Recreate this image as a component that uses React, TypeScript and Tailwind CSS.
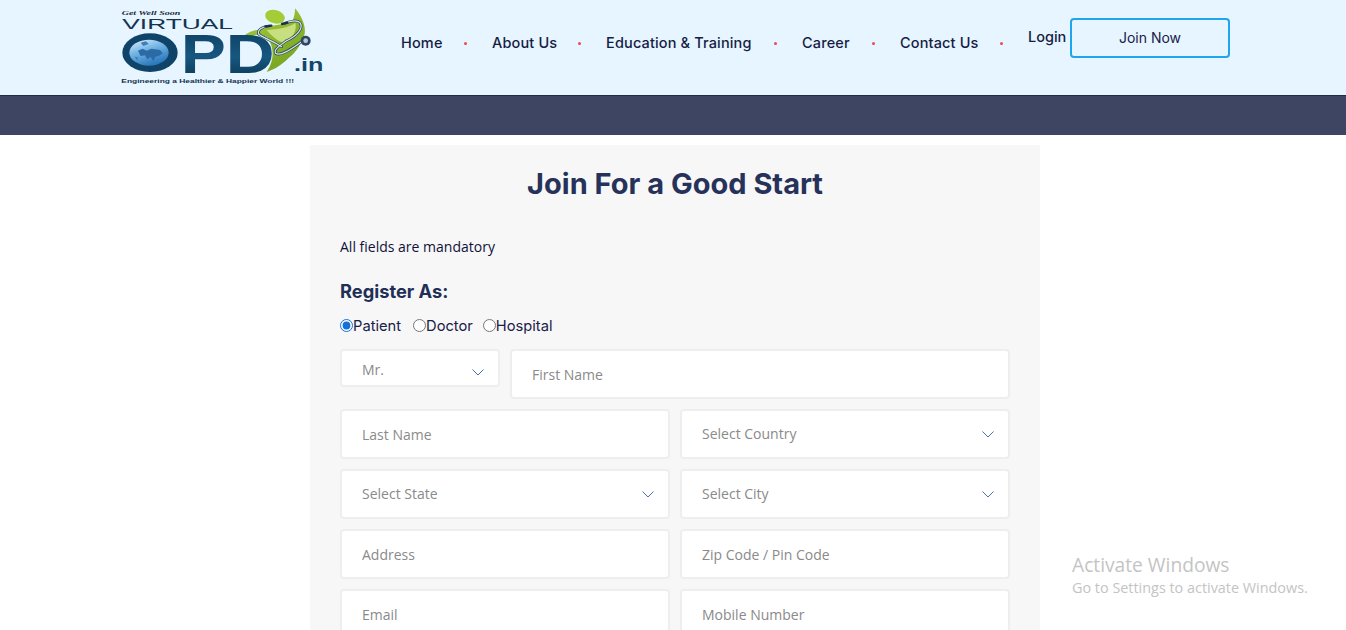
import React from "react";

function Logo() {
  return (
    <svg viewBox="0 0 690 285" className="w-[230px] h-[95px] shrink-0" aria-label="Virtual OPD logo">
      <defs>
        <linearGradient id="opd" x1="0" y1="0" x2="0" y2="1">
          <stop offset="0" stopColor="#0d3b5e" />
          <stop offset="0.55" stopColor="#17577f" />
          <stop offset="0.8" stopColor="#0f4263" />
          <stop offset="1" stopColor="#1d3f5f" />
        </linearGradient>
        <linearGradient id="globe" x1="0" y1="0" x2="0.5" y2="1">
          <stop offset="0" stopColor="#e6f3fb" />
          <stop offset="0.45" stopColor="#79b8e6" />
          <stop offset="1" stopColor="#2b78bd" />
        </linearGradient>
        <linearGradient id="leaf" x1="0" y1="0" x2="0.6" y2="1">
          <stop offset="0" stopColor="#a9cf3c" />
          <stop offset="1" stopColor="#78a423" />
        </linearGradient>
      </defs>
      <text x="35" y="44" fontFamily="Liberation Serif, serif" fontStyle="italic" fontWeight="700" fontSize="21" fill="#1a2a3a" textLength="176" lengthAdjust="spacingAndGlyphs">Get Well Soon</text>
      <text x="37" y="88" fontFamily="Liberation Sans, sans-serif" fontSize="46" fill="#15324e" textLength="332" lengthAdjust="spacingAndGlyphs">VIRTUAL</text>
      <path d="M555 25C585 60 590 95 580 112C570 140 555 160 535 175C515 195 495 208 470 216C488 190 498 150 472 112C450 100 420 105 392 116C410 98 425 92 442 90C470 72 520 78 548 62C553 50 555 38 555 25Z" fill="url(#leaf)" />
      <path d="M470 90C500 88 540 82 556 68C562 90 548 118 520 128C500 122 485 108 470 90Z" fill="#c7df7e" />
      <ellipse cx="495" cy="50" rx="30" ry="20" transform="rotate(15 495 50)" fill="#a4cb38" />
      <ellipse cx="120" cy="158" rx="83" ry="58" fill="#0f4468" />
      <ellipse cx="117" cy="158" rx="59" ry="39" fill="url(#globe)" />
      <path d="M84 152L98 146L110 152L124 146L150 150L158 160L146 168L136 170L130 184L122 171L112 178L105 166L92 168Z" fill="#2a6aa5" />
      <path d="M140 176L152 178L148 186ZM74 170L84 172L82 182ZM92 128L108 124L116 132L100 138Z" fill="#3c80bb" />
      <text x="212" y="218" fontFamily="Liberation Sans, sans-serif" fontWeight="700" fontSize="165" fill="url(#opd)" textLength="282" lengthAdjust="spacingAndGlyphs">PD</text>
      <g fill="none" strokeLinecap="round" strokeLinejoin="round">
        <path d="M478 78C455 80 442 90 446 102C455 112 480 118 515 140" stroke="#26456e" strokeWidth="8" />
        <path d="M525 70C545 62 562 60 570 68C582 85 560 108 530 122C505 140 490 150 497 160C510 170 540 150 575 125" stroke="#26456e" strokeWidth="8" />
        <path d="M478 78C455 80 442 90 446 102C455 112 480 118 515 140" stroke="#d9e8d8" strokeWidth="3.5" />
        <path d="M525 70C545 62 562 60 570 68C582 85 560 108 530 122C505 140 490 150 497 160C510 170 540 150 575 125" stroke="#d9e8d8" strokeWidth="3.5" />
      </g>
      <path d="M466 79L484 77M516 72L532 68" stroke="#1d2f4d" strokeWidth="7" strokeLinecap="round" />
      <circle cx="587" cy="122" r="15" fill="#2d4668" />
      <circle cx="587" cy="122" r="7" fill="#b7c6d3" />
      <text x="552" y="212" fontFamily="Liberation Sans, sans-serif" fontWeight="700" fontSize="54" fill="#12466c" textLength="88" lengthAdjust="spacingAndGlyphs">.in</text>
      <text x="34" y="250" fontFamily="Liberation Sans, sans-serif" fontWeight="700" fontSize="18" fill="#15324e" textLength="518" lengthAdjust="spacingAndGlyphs">Engineering a Healthier &amp; Happier World !!!</text>
    </svg>
  );
}

function NavItem({ label, cls }: { label: string; cls: string }) {
  return (
    <div className="flex items-center">
      <a className={"text-[14.5px] font-medium text-[#161c44] whitespace-nowrap tracking-[0.15px] " + cls}>{label}</a>
      <span className="ml-[22px] mr-[25px] w-[3px] h-[3px] rounded-full bg-[#f04848]" />
    </div>
  );
}

function Field({ ph, className = "" }: { ph: string; className?: string }) {
  return (
    <input
      placeholder={ph}
      readOnly
      className={"h-[50px] min-w-0 bg-white border-2 border-[#eeeeee] rounded-[4px] pl-5 text-[14px] outline-none placeholder:text-[#8a8a8a] " + className}
    />
  );
}

function Chevron() {
  return (
    <svg viewBox="0 0 12 7" className="w-3 h-[7px]" fill="none" stroke="#4a6fb0" strokeWidth="1">
      <path d="M.5.5 6 6 11.5.5" />
    </svg>
  );
}

function Select({ label, className = "" }: { label: string; className?: string }) {
  return (
    <div className={"h-[50px] flex items-center justify-between bg-white border-2 border-[#eeeeee] rounded-[4px] pl-5 pr-[14px] text-[14px] text-[#8a8a8a] " + className}>
      <span className="-mt-[2px]">{label}</span>
      <Chevron />
    </div>
  );
}

export default function App() {
  return (
    <div className="relative h-[630px] overflow-hidden bg-white font-['Open_Sans',sans-serif]">
      <header className="h-[96px] bg-[#e6f5ff] border-b border-[#22294a] pl-[110px] flex items-start">
        <Logo />
        <nav className="ml-[61px] flex items-center h-[86px] font-['Inter',sans-serif]">
          <NavItem label="Home" cls="w-[41px]" />
          <NavItem label="About Us" cls="w-[64px]" />
          <NavItem label="Education & Training" cls="w-[146px]" />
          <NavItem label="Career" cls="w-[48px]" />
          <NavItem label="Contact Us" cls="w-[78px]" />
        </nav>
        <div className="flex items-center h-[75px] font-['Inter',sans-serif]">
          <a className="w-[42px] text-[14.5px] font-medium text-[#161c44] -mt-[1px]">Login</a>
          <a className="w-40 h-10 flex items-center justify-center border-2 border-[#1fa5ee] rounded-[4px] text-[14px] text-[#1a2048]">Join Now</a>
        </div>
      </header>
      <div className="h-[39px] bg-[#3e4563]" />
      <main className="w-[730px] ml-[310px] mt-[10px] bg-[#f7f7f7] px-[30px] h-[500px]">
        <h1 className="pt-[19px] text-center text-[29px] leading-[39px] font-bold text-[#27325a] font-['Inter',sans-serif]">Join For a Good Start</h1>
        <p className="mt-[34px] text-[14px] leading-5 text-[#10103a]">All fields are mandatory</p>
        <h2 className="mt-[22px] text-[18.3px] leading-6 font-bold text-[#1f2f55] font-['Inter',sans-serif]">Register As:</h2>
        <div className="mt-[13px] flex items-center text-[14.7px] leading-5 text-[#1a2048] font-['Inter',sans-serif]">
          <input type="radio" name="r" defaultChecked className="m-0 -mt-[2px] w-[13px] h-[13px] accent-[#1272d8]" />
          <span className="mr-[12px]">Patient</span>
          <input type="radio" name="r" className="m-0 -mt-[2px] w-[13px] h-[13px]" />
          <span className="mr-[10px]">Doctor</span>
          <input type="radio" name="r" className="m-0 -mt-[2px] w-[13px] h-[13px]" />
          <span>Hospital</span>
        </div>
        <div className="mt-[13px] flex gap-[10px] items-start">
          <div className="w-40 h-[38px] flex items-center justify-between bg-white border-2 border-[#eeeeee] rounded-[4px] pl-5 pr-[14px] text-[14px] text-[#8a8a8a]">
            <span className="mt-[2px]">Mr.</span>
            <span className="mt-[8px]"><Chevron /></span>
          </div>
          <Field ph="First Name" className="flex-1" />
        </div>
        <div className="mt-[10px] grid grid-cols-2 gap-[10px]">
          <Field ph="Last Name" />
          <Select label="Select Country" />
          <Select label="Select State" />
          <Select label="Select City" />
          <Field ph="Address" />
          <Field ph="Zip Code / Pin Code" />
          <Field ph="Email" />
          <Field ph="Mobile Number" />
        </div>
      </main>
      <div className="absolute left-[1072px] top-[553px] text-[#c4c4c4] font-['Open_Sans',sans-serif]">
        <div className="text-[19.2px] leading-6">Activate Windows</div>
        <div className="text-[14.4px] leading-[22px]">Go to Settings to activate Windows.</div>
      </div>
    </div>
  );
}
